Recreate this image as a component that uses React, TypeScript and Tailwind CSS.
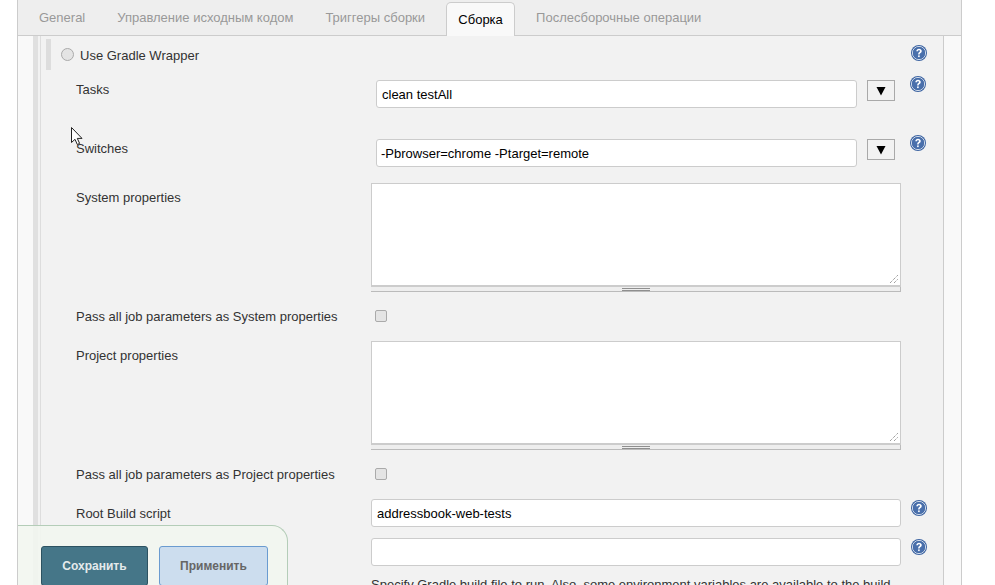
const HelpIcon = () => (
  <svg width="16" height="16" viewBox="0 0 16 16" className="block">
    <circle cx="8" cy="8" r="8" fill="#3d64a2" />
    <circle cx="8" cy="8" r="6.6" fill="none" stroke="#dfe6f1" strokeWidth="0.9" />
    <circle cx="8" cy="8" r="5.8" fill="#4a70ac" />
    <path d="M5.3 6.2c0-1.6 1.2-2.5 2.7-2.5s2.8.9 2.8 2.4c0 2-2.2 2-2.2 3.5H7.1c0-2.4 1.9-2.4 1.9-3.5 0-.5-.4-.9-1-.9s-1 .4-1 1z" fill="#fff" />
    <rect x="7.1" y="10.4" width="1.6" height="1.7" fill="#fff" />
  </svg>
);

const DropButton = () => (
  <button className="w-[28px] h-[21px] bg-[#f2f2f2] border border-[#a9a9a9] flex items-center justify-center">
    <svg width="10" height="10" viewBox="0 0 10 10">
      <path d="M0.5 1h9L5 9.5z" fill="#000" />
    </svg>
  </button>
);

const ResizeCorner = () => (
  <svg width="10" height="10" viewBox="0 0 10 10" className="absolute right-[1px] bottom-[1px]">
    <path d="M1 9L9 1M5 9L9 5" stroke="#777" strokeWidth="1" strokeDasharray="1 1" />
  </svg>
);

const BigText = () => (
  <div className="w-[530px]">
    <div className="relative h-[104px] bg-white border border-[#ccc] border-b-2">
      <ResizeCorner />
    </div>
    <div className="h-[5px] bg-[#eee] border-b border-r border-[#bbb] flex justify-center">
      <div className="w-[28px] h-[3px] mt-px border-y border-[#8f8f8f]" />
    </div>
  </div>
);

const TextInput = ({ value, className }: { value: string; className: string }) => (
  <div className={`h-[28px] pt-px bg-white border border-[#ccc] rounded-[3px] text-black flex items-center ${className}`}>
    {value}
  </div>
);

const Checkbox = () => (
  <div className="w-[12px] h-[12px] ml-[4px] -mt-px rounded-[2px] border border-[#aaa] bg-[#e4e4e4]" />
);

export default function App() {
  return (
    <div className="relative w-[995px] h-[585px] overflow-hidden bg-white text-[13px] text-[#333] font-['Liberation_Sans',Arial,sans-serif]">
      <div className="ml-[17px] w-[945px] h-[585px] border-x border-[#ccc] flex flex-col">
        {/* вкладки */}
        <div className="h-[36px] shrink-0 bg-[#eee] border-b border-[#ccc] flex items-end text-[#999]">
          <span className="ml-[21px] mb-[8px]">General</span>
          <span className="ml-[32px] mb-[8px]">Управление исходным кодом</span>
          <span className="ml-[32px] mb-[8px]">Триггеры сборки</span>
          <span className="ml-[21px] -mb-px w-[69px] h-[34px] pt-px bg-[#f9f9f9] border border-b-0 border-[#ccc] rounded-t-[5px] text-black flex items-center justify-center">
            Сборка
          </span>
          <span className="ml-[21px] mb-[8px]">Послесборочные операции</span>
        </div>

        <div className="flex flex-1 min-h-0">
          <div className="w-[15px] bg-[#f9f9f9]" />
          <div className="w-[5px] bg-[#e0e0e0]" />
          <div className="w-[2px] bg-[#f2f2f2]" />
          <div className="flex-1 min-w-0 bg-[#f2f2f2] border-l border-[#ddd] border-r border-r-[#ccc] relative">
            {/* Use Gradle Wrapper */}
            <div className="flex h-[31px] mt-[3px] ml-[5px]">
              <div className="w-[5px] bg-[#ddd]" />
              <div className="mt-[9px] ml-[10px] w-[13px] h-[13px] rounded-full border border-[#aaa] bg-[#e4e4e4]" />
              <span className="ml-[6px] mt-[7px]">Use Gradle Wrapper</span>
              <div className="ml-auto mr-[16px] mt-[6px]"><HelpIcon /></div>
            </div>

            {/* Tasks */}
            <div className="flex mt-[10px] pl-[35px] h-[28px]">
              <span className="w-[300px] leading-[18px] pt-px">Tasks</span>
              <TextInput value="clean testAll" className="w-[481px] pl-[5px]" />
              <div className="ml-[10px]"><DropButton /></div>
              <div className="ml-[15px] -mt-[4px]"><HelpIcon /></div>
            </div>

            {/* Switches */}
            <div className="flex mt-[31px] pl-[35px] h-[28px]">
              <span className="w-[300px] leading-[18px] pt-px">Switches</span>
              <TextInput value="-Pbrowser=chrome -Ptarget=remote" className="w-[481px] pl-[4px]" />
              <div className="ml-[10px]"><DropButton /></div>
              <div className="ml-[15px] -mt-[4px]"><HelpIcon /></div>
            </div>

            {/* System properties */}
            <div className="flex mt-[16px] pl-[35px]">
              <span className="w-[295px] leading-[18px] mt-[6px]">System properties</span>
              <BigText />
            </div>
            <div className="flex items-center mt-[16px] pl-[35px] h-[16px]">
              <span className="w-[295px] translate-y-px whitespace-nowrap">Pass all job parameters as System properties</span>
              <Checkbox />
            </div>

            {/* Project properties */}
            <div className="flex mt-[17px] pl-[35px]">
              <span className="w-[295px] leading-[18px] mt-[6px]">Project properties</span>
              <BigText />
            </div>
            <div className="flex items-center mt-[16px] pl-[35px] h-[16px]">
              <span className="w-[295px] translate-y-px whitespace-nowrap">Pass all job parameters as Project properties</span>
              <Checkbox />
            </div>

            {/* Root Build script */}
            <div className="flex mt-[17px] pl-[35px] h-[28px]">
              <span className="w-[295px] leading-[28px] pt-px">Root Build script</span>
              <TextInput value="addressbook-web-tests" className="w-[530px] pl-[5px]" />
              <div className="ml-[10px] mt-px"><HelpIcon /></div>
            </div>
            <div className="flex mt-[11px] pl-[330px] h-[28px]">
              <TextInput value="" className="w-[530px]" />
              <div className="ml-[10px] mt-px"><HelpIcon /></div>
            </div>
            <p className="mt-[9px] pl-[330px] whitespace-nowrap">
              Specify Gradle build file to run. Also, some environment variables are available to the build
            </p>
          </div>
          <div className="w-[17px] bg-[#f9f9f9]" />
        </div>
      </div>

      {/* панель сохранения */}
      <div className="absolute left-[18px] bottom-0 w-[270px] h-[60px] bg-[#f2f6ef]/90 border-t border-r border-[#b4cdb8] rounded-tr-[16px] flex gap-[11px] pl-[23px] pt-[20px] font-bold">
        <button className="w-[107px] h-[40px] bg-[#457688] border border-[#2c5261] rounded-[3px] text-[#e4eaec] text-[12px]">
          Сохранить
        </button>
        <button className="w-[109px] h-[40px] bg-[#ccddee] border border-[#6a9bd0] rounded-[3px] text-[#666] text-[12px]">
          Применить
        </button>
      </div>

      {/* курсор */}
      <svg width="13" height="20" viewBox="0 0 13 20" className="absolute left-[71px] top-[127px]">
        <path d="M0.5 0.5V15.5L4 12.3L6.3 17.5L8.6 16.4L6.3 11.4H11z" fill="#fff" stroke="#222" strokeWidth="1" />
      </svg>
    </div>
  );
}
